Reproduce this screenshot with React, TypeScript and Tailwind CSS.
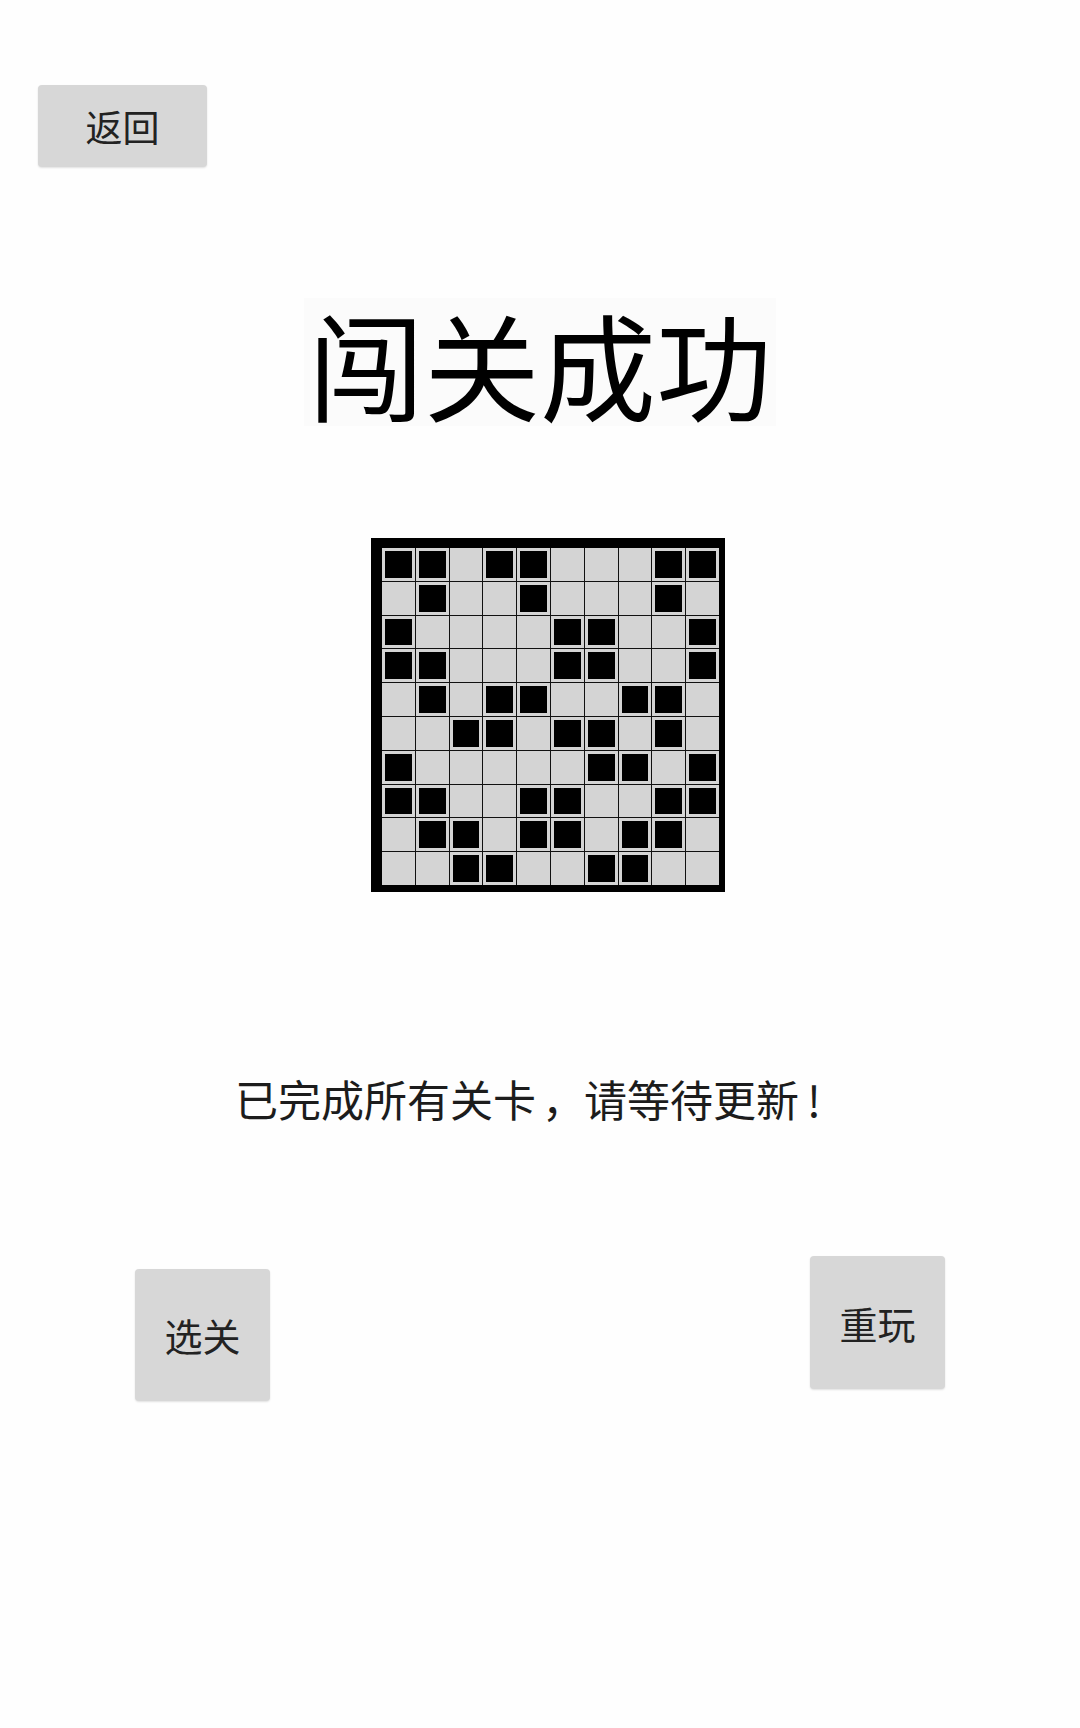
import React from 'react';

// 1 = filled cell
const board: number[][] = [
  [1, 1, 0, 1, 1, 0, 0, 0, 1, 1],
  [0, 1, 0, 0, 1, 0, 0, 0, 1, 0],
  [1, 0, 0, 0, 0, 1, 1, 0, 0, 1],
  [1, 1, 0, 0, 0, 1, 1, 0, 0, 1],
  [0, 1, 0, 1, 1, 0, 0, 1, 1, 0],
  [0, 0, 1, 1, 0, 1, 1, 0, 1, 0],
  [1, 0, 0, 0, 0, 0, 1, 1, 0, 1],
  [1, 1, 0, 0, 1, 1, 0, 0, 1, 1],
  [0, 1, 1, 0, 1, 1, 0, 1, 1, 0],
  [0, 0, 1, 1, 0, 0, 1, 1, 0, 0],
];

const font = { fontFamily: '"Noto Sans CJK SC", "Noto Sans", sans-serif' };

const GreyButton: React.FC<{ label: string; className?: string }> = ({ label, className = '' }) => (
  <button
    className={`flex items-center justify-center rounded-[4px] bg-[#d7d7d7] text-[#222] shadow-[0_1px_2px_rgba(0,0,0,0.12)] ${className}`}
  >
    {label}
  </button>
);

export default function App() {
  return (
    <div className="w-[1080px] h-[1728px] bg-[#fefefe] flex flex-col" style={font}>
      {/* Top bar */}
      <div className="pt-[85px] pl-[38px]">
        <GreyButton label="返回" className="w-[169px] h-[82px] text-[37px] leading-none" />
      </div>

      {/* Title */}
      <div className="mt-[131px] flex justify-center">
        <div className="bg-[#fbfbfb] px-[4px] text-[116px] leading-[128px] text-black">闯关成功</div>
      </div>

      {/* Board */}
      <div className="mt-[112px] pl-[371px]">
        <div className="w-[354px] h-[354px] bg-black pl-[11px] pt-[10px] pr-[6px] pb-[7px]">
          <div className="grid grid-cols-10 gap-[1px] bg-[#111] w-[337px] h-[337px]">
            {board.flat().map((v, i) => (
              <div key={i} className="bg-[#d4d4d4] p-[3px]">
                {v === 1 && <div className="w-full h-full bg-black" />}
              </div>
            ))}
          </div>
        </div>
      </div>

      {/* Message */}
      <div className="mt-[178px] pl-[235px]">
        <div className="flex items-baseline text-[43px] leading-[56px] text-[#1c1c1c] whitespace-nowrap">
          <span>已完成所有关卡</span>
          <span className="inline-block w-[48px] pl-[6px]">，</span>
          <span>请等待更新</span>
          <span className="inline-block pl-[8px]">!</span>
        </div>
      </div>

      {/* Bottom buttons */}
      <div className="mt-[130px] flex justify-between items-start px-[135px]">
        <GreyButton label="选关" className="mt-[13px] w-[135px] h-[132px] text-[38px] leading-none" />
        <GreyButton label="重玩" className="w-[135px] h-[133px] text-[38px] leading-none" />
      </div>
    </div>
  );
}
